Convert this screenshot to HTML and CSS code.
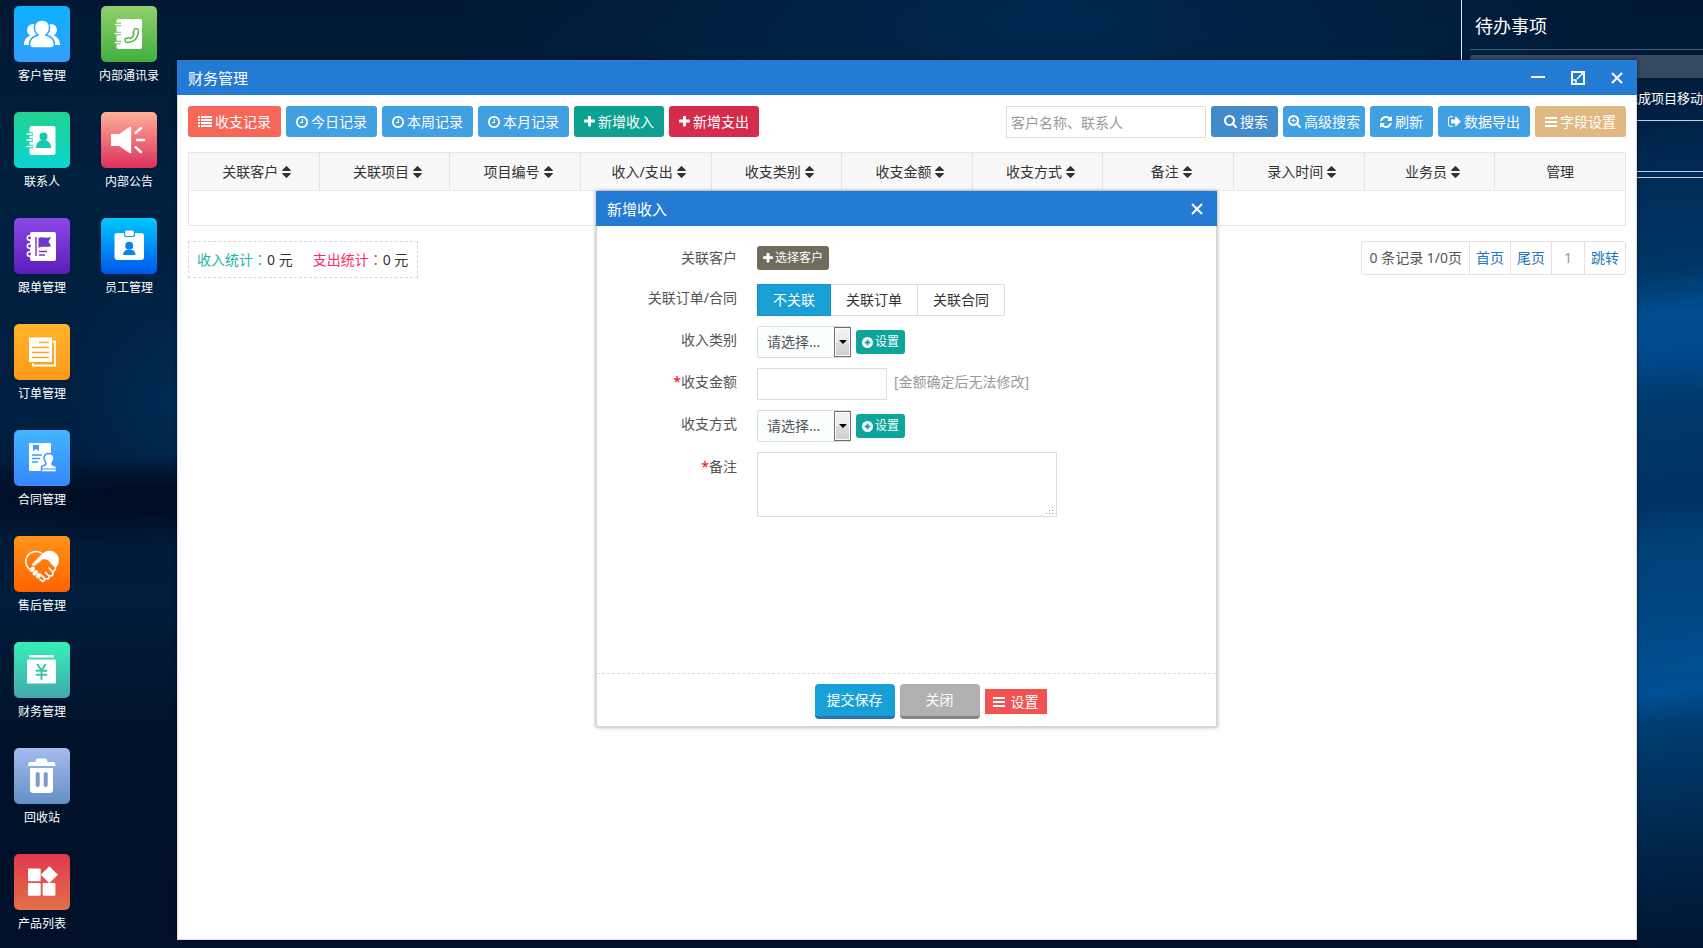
FILE: index.html
```html
<!DOCTYPE html>
<html lang="zh-CN">
<head>
<meta charset="utf-8">
<title>财务管理</title>
<link rel="stylesheet" href="styles.css">
</head>
<body>
<svg class="sprite" aria-hidden="true">
  <symbol id="i-list" viewBox="0 0 14 14"><path d="M0 1h2v2H0zM3 1h11v2H3zM0 4h2v2H0zM3 4h11v2H3zM0 7h2v2H0zM3 7h11v2H3zM0 10h2v2H0zM3 10h11v2H3z"/></symbol>
  <symbol id="i-bars" viewBox="0 0 12 12"><path d="M0 1h12v2H0zM0 5h12v2H0zM0 9h12v2H0z"/></symbol>
  <symbol id="i-clock" viewBox="128 128 1536 1536"><path d="M1024 544v448q0 14-9 23t-23 9h-320q-14 0-23-9t-9-23v-64q0-14 9-23t23-9h224v-352q0-14 9-23t23-9h64q14 0 23 9t9 23zm416 352q0-148-73-273t-198-198-273-73-273 73-198 198-73 273 73 273 198 198 273 73 273-73 198-198 73-273zm224 0q0 209-103 385.500t-279.500 279.500-385.500 103-385.500-103-279.500-279.500-103-385.500 103-385.500 279.500-279.500 385.500-103 385.500 103 279.500 279.500 103 385.500z"/></symbol>
  <symbol id="i-plus" viewBox="192 192 1408 1408"><path d="M1600 736v192q0 40-28 68t-68 28h-416v416q0 40-28 68t-68 28h-192q-40 0-68-28t-28-68v-416h-416q-40 0-68-28t-28-68v-192q0-40 28-68t68-28h416v-416q0-40 28-68t68-28h192q40 0 68 28t28 68v416h416q40 0 68 28t28 68z"/></symbol>
  <symbol id="i-search" viewBox="64 128 1664 1664"><path d="M1216 832q0-185-131.500-316.500t-316.500-131.500-316.500 131.500-131.500 316.500 131.500 316.500 316.500 131.500 316.500-131.500 131.500-316.500zm512 832q0 52-38 90t-90 38q-54 0-90-38l-343-342q-179 124-399 124-143 0-273.500-55.500t-225-150-150-225-55.500-273.500 55.500-273.500 150-225 225-150 273.500-55.500 273.500 55.500 225 150 150 225 55.500 273.500q0 220-124 399l343 343q37 37 37 90z"/></symbol>
  <symbol id="i-zoomin" viewBox="64 128 1664 1664"><use href="#i-search" x="64" y="128" width="1664" height="1664"/><path d="M704 576h128v192h192v128h-192v192h-128v-192h-192v-128h192z"/></symbol>
  <symbol id="i-refresh" viewBox="128 128 1536 1536"><path d="M1639 1056q0 5-1 7-64 268-268 434.500t-478 166.500q-146 0-282.500-55t-243.500-157l-129 129q-19 19-45 19t-45-19-19-45v-448q0-26 19-45t45-19h448q26 0 45 19t19 45-19 45l-137 137q71 66 161 102t187 36q134 0 250-65t186-179q11-17 53-117 8-23 30-23h192q13 0 22.500 9.500t9.500 22.500zm25-800v448q0 26-19 45t-45 19h-448q-26 0-45-19t-19-45 19-45l138-138q-148-137-349-137-134 0-250 65t-186 179q-11 17-53 117-8 23-30 23h-199q-13 0-22.500-9.500t-9.500-22.500v-7q65-268 270-434.500t480-166.500q146 0 284 55.500t245 156.500l130-129q19-19 45-19t45 19 19 45z"/></symbol>
  <symbol id="i-export" viewBox="64 96 1600 1600"><path d="M704 1440q0 4 1 20t.5 26.500-3 23.500-10 19.500-20.500 6.500h-320q-119 0-203.500-84.500t-84.500-203.500v-704q0-119 84.500-203.500t203.500-84.500h320q13 0 22.500 9.500t9.500 22.500q0 4 1 20t.5 26.500-3 23.500-10 19.500-20.500 6.500h-320q-66 0-113 47t-47 113v704q0 66 47 113t113 47h312l11.500 1 11.500 3 8 5.500 7 9 2 13.500zm928-544q0 26-19 45l-544 544q-19 19-45 19t-45-19-19-45v-288h-448q-26 0-45-19t-19-45v-384q0-26 19-45t45-19h448v-288q0-26 19-45t45-19 45 19l544 544q19 19 19 45z"/></symbol>
  <symbol id="i-sort" viewBox="384 192 1024 1408"><path d="M1408 1088q0 26-19 45l-448 448q-19 19-45 19t-45-19l-448-448q-19-19-19-45t19-45 45-19h896q26 0 45 19t19 45zm0-384q0 26-19 45t-45 19h-896q-26 0-45-19t-19-45 19-45l448-448q19-19 45-19t45 19l448 448q19 19 19 45z"/></symbol>
  <symbol id="i-pluscircle" viewBox="0 0 12 12"><path fill-rule="evenodd" d="M6 0a6 6 0 1 0 0 12A6 6 0 0 0 6 0zM5 3h2v2h2v2H7v2H5V7H3V5h2z"/></symbol>
  <symbol id="i-close" viewBox="0 0 12 12"><path d="M1 1l10 10M11 1L1 11" fill="none" stroke="currentColor" stroke-width="2"/></symbol>
</svg>

<div class="desktop">
  <nav class="shortcuts" aria-label="桌面">
    <div class="shortcut-col">
      <a class="shortcut" href="#"><svg class="tile t-blue" viewBox="0 0 56 56"><g fill="#fff"><circle cx="19" cy="24" r="6"/><circle cx="37" cy="24" r="6"/><path d="M10 39c0-6 3-8 7-10h6v10zM46 39c0-6-3-8-7-10h-6v10z"/></g><path d="M28 14c4.500 0 7.500 3 7.500 7.500 0 3-1.500 6-3.500 7.500 5 1.500 8.500 4 8.500 9 0 3-2 4-4 4h-17c-2 0-4-1-4-4 0-5 3.500-7.500 8.500-9-2-1.500-3.500-4.500-3.500-7.500 0-4.500 3-7.500 7.500-7.500z" fill="#fff" stroke="#22a9ff" stroke-width="1.500"/></svg>客户管理</a>
      <a class="shortcut" href="#"><svg class="tile t-teal" viewBox="0 0 56 56"><rect x="15.500" y="14" width="26" height="29" rx="2" fill="#fff"/><g fill="none" stroke="#17d3ac" stroke-width="3.500"><path d="M14 22h5M14 28h5M14 34.500h5"/></g><g stroke="#fff" stroke-width="1.600" stroke-linecap="round"><path d="M13 22h5M13 28h5M13 34.500h5"/></g><circle cx="29.500" cy="24.500" r="4" fill="#14c9b0"/><path d="M22 36c0-5 3-8 7.500-8s7.500 3 7.500 8z" fill="#14c9b0"/></svg>联系人</a>
      <a class="shortcut" href="#"><svg class="tile t-purple" viewBox="0 0 56 56"><rect x="16" y="14" width="26" height="29" rx="2" fill="#fff"/><g fill="#7434c8" stroke="#fff" stroke-width="1.500"><circle cx="15.500" cy="20" r="2.200"/><circle cx="15.500" cy="28" r="2.200"/><circle cx="15.500" cy="36" r="2.200"/></g><path d="M22 19v19M25 33.500h8M25 37h6" stroke="#7434c8" stroke-width="1.400"/><path d="M24.500 20c4-2 7 1 12.500-1l-2.500 4.500 2.500 4.500c-5 2-8-.5-12.500 2z" fill="#7434c8"/></svg>跟单管理</a>
      <a class="shortcut" href="#"><svg class="tile t-amber" viewBox="0 0 56 56"><path d="M19 39v2.500h22V17.500h-2.500" fill="none" stroke="#fff" stroke-width="1.800"/><rect x="15" y="13.500" width="23" height="24.500" fill="#fff"/><path d="M25 18.500h10M18 23.500h17M18 28.500h17M18 33.500h17" stroke="#ffa722" stroke-width="1.500"/></svg>订单管理</a>
      <a class="shortcut" href="#"><svg class="tile t-sky" viewBox="0 0 56 56"><rect x="15" y="13" width="22" height="28" rx="1" fill="#fff"/><path d="M19 15h6v6l-3-2-3 2zM18 24.200h10v1.600H18zM18 27.700h8v1.600h-8zM18 31.200h6v1.600h-6z" fill="#3ba0ff"/><path d="M35 23.500c3 0 5 2 5 5 0 2.500-2.500 3.500-2 6l4.500 2v5.500h-15v-5.500l4.500-2c.5-2.500-2-3.500-2-6 0-3 2-5 5-5z" fill="#fff" stroke="#3b9aff" stroke-width="1.500"/><path d="M28 39h14" stroke="#3b94ff"/></svg>合同管理</a>
      <a class="shortcut" href="#"><svg class="tile t-orange" viewBox="0 0 56 56"><path d="M28 17.500c-5-3.500-12-2-15 3-2.500 5-1 9.500 2.500 13" fill="none" stroke="#fff" stroke-width="1.500"/><path d="M18 28l10-10c5-5 12-4 15.500 1 3 5 1 10-2 13.500L34 24l-5-1-8 6.500c-1.500 1-3.500-.5-3-1.500z" fill="#fff"/><path d="M17.500 34l1.500-1.500M20.500 37.500l1.500-1.500M24 40.500l1.500-1.500" stroke="#fff" stroke-width="4" stroke-linecap="round"/><path d="M26 43.500l3 2 2-2-3-4M31 42.500l3 .5 1.500-2.500-4-4M35.500 40l3-.5.500-3-4-4.500M39 36l2.500-3" fill="none" stroke="#fff" stroke-width="1.700" stroke-linecap="round" stroke-linejoin="round"/></svg>售后管理</a>
      <a class="shortcut" href="#"><svg class="tile t-mint" viewBox="0 0 56 56"><rect x="15" y="13" width="25" height="2.600" rx="1" fill="#fff"/><rect x="13" y="17.500" width="29" height="24" rx="1" fill="#fff"/><path d="M23.500 22.500l4 6 4-6M27.500 28v9M22.500 28.700h10M22.500 32.700h10" fill="none" stroke="#3cc4ae" stroke-width="2" stroke-linecap="round"/></svg>财务管理</a>
      <a class="shortcut" href="#"><svg class="tile t-steel" viewBox="0 0 56 56"><path d="M14 18v-1c0-2 1-3 3-3h4.500c.5-3 1-3.500 3-3.500h6c2 0 2.500.5 3 3.500H38c2.500 0 3.500 1 3.500 3v1z" fill="#fff"/><path d="M16 20h23v22c0 2-1.500 3-3 3H19c-2 0-3-1-3-3z" fill="#fff"/><rect x="21.700" y="24" width="4" height="15" rx="2" fill="#7a9ad2"/><rect x="29.700" y="24" width="4" height="15" rx="2" fill="#7a9ad2"/></svg>回收站</a>
      <a class="shortcut" href="#"><svg class="tile t-red" viewBox="0 0 56 56"><g fill="#fff"><rect x="14" y="14.500" width="12.700" height="12.700" rx="1"/><rect x="14" y="29" width="12.700" height="12.700" rx="1"/><rect x="28.700" y="29" width="12.700" height="12.700" rx="1"/><path d="M35.300 12.300l8.500 8.500-8.500 8.500-8.500-8.500z"/></g></svg>产品列表</a>
    </div>
    <div class="shortcut-col">
      <a class="shortcut" href="#"><svg class="tile t-green" viewBox="0 0 56 56"><rect x="15.500" y="13" width="25.500" height="30" rx="2" fill="#fff"/><g stroke="#6abf57" stroke-width="3.500"><path d="M14 18.500h6M14 27.500h6M14 36.500h6"/></g><g stroke="#fff" stroke-width="1.700" stroke-linecap="round"><path d="M14.500 18.500h5M14.500 27.500h5M14.500 36.500h5"/></g><path d="M34 22.500c2-.5 3.500.5 3.500 2.500-.3 7-4 11-11 11.500-2 0-3-2-2.500-3.500l3.500-1.500 1.500 1c2-.5 3.500-2.500 4-4.500l-1-1.500z" fill="none" stroke="#58b34c" stroke-width="1.400" stroke-linejoin="round"/></svg>内部通讯录</a>
      <a class="shortcut" href="#"><svg class="tile t-rose" viewBox="0 0 56 56"><path d="M11 22h7l10.500-7c1-.6 1.700 0 1.700 1v24c0 1-.7 1.600-1.700 1L18 34h-7c-.6 0-1-.4-1-1V23c0-.6.4-1 1-1z" fill="#fff"/><path d="M34.500 21l5.500-5M36 28h7M34.500 35l5.500 5" stroke="#fff" stroke-width="2.400" stroke-linecap="round"/></svg>内部公告</a>
      <a class="shortcut" href="#"><svg class="tile t-azure" viewBox="0 0 56 56"><rect x="13.500" y="15" width="29.500" height="27" rx="3" fill="#fff"/><rect x="23.500" y="12" width="10" height="6.500" rx="2" fill="#fff" stroke="#04a3f8" stroke-width="1.200"/><circle cx="28.200" cy="27.800" r="4" fill="#0585f3"/><path d="M22 37c0-3 2-5 4-5h4.500c2 0 4 2 4 5z" fill="#0585f3"/></svg>员工管理</a>
    </div>
  </nav>

  <aside class="todo">
    <h2 class="todo-title">待办事项</h2>
    <div class="todo-bar"></div>
    <p class="todo-item">完成项目移动</p>
    <div class="todo-gap"></div>
  </aside>

  <main class="window">
    <header class="titlebar">
      <h1 class="title">财务管理</h1>
      <div class="controls">
        <button class="ctl" type="button" aria-label="最小化"><svg width="14" height="14" viewBox="0 0 14 14"><path d="M0 5h14v2H0z" fill="currentColor"/></svg></button>
        <button class="ctl" type="button" aria-label="还原"><svg width="14" height="14" viewBox="0 0 14 14" fill="none" stroke="currentColor" stroke-width="2"><path d="M1 1h12v12H1z"/><path d="M1 9h4v4M6 8l6-6" stroke-width="1.500"/></svg></button>
        <button class="ctl" type="button" aria-label="关闭"><svg class="ic s12"><use href="#i-close"/></svg></button>
      </div>
    </header>
    <div class="window-body">
      <div class="toolbar">
        <button class="btn coral" type="button"><svg class="ic s14"><use href="#i-list"/></svg>收支记录</button>
        <button class="btn blue" type="button"><svg class="ic s12"><use href="#i-clock"/></svg>今日记录</button>
        <button class="btn blue" type="button"><svg class="ic s12"><use href="#i-clock"/></svg>本周记录</button>
        <button class="btn blue" type="button"><svg class="ic s12"><use href="#i-clock"/></svg>本月记录</button>
        <button class="btn teal" type="button"><svg class="ic s11"><use href="#i-plus"/></svg>新增收入</button>
        <button class="btn crimson" type="button"><svg class="ic s11"><use href="#i-plus"/></svg>新增支出</button>
        <input class="search" type="text" placeholder="客户名称、联系人" aria-label="搜索">
        <button class="btn navy" type="button"><svg class="ic s13"><use href="#i-search"/></svg>搜索</button>
        <button class="btn blue tight" type="button"><svg class="ic s13"><use href="#i-zoomin"/></svg>高级搜索</button>
        <button class="btn blue" type="button"><svg class="ic s12"><use href="#i-refresh"/></svg>刷新</button>
        <button class="btn blue" type="button"><svg class="ic s13"><use href="#i-export"/></svg>数据导出</button>
        <button class="btn sand" type="button"><svg class="ic s12"><use href="#i-bars"/></svg>字段设置</button>
      </div>
      <table class="grid">
        <thead>
          <tr>
            <th>关联客户<svg class="sort"><use href="#i-sort"/></svg></th>
            <th>关联项目<svg class="sort"><use href="#i-sort"/></svg></th>
            <th>项目编号<svg class="sort"><use href="#i-sort"/></svg></th>
            <th>收入/支出<svg class="sort"><use href="#i-sort"/></svg></th>
            <th>收支类别<svg class="sort"><use href="#i-sort"/></svg></th>
            <th>收支金额<svg class="sort"><use href="#i-sort"/></svg></th>
            <th>收支方式<svg class="sort"><use href="#i-sort"/></svg></th>
            <th>备注<svg class="sort"><use href="#i-sort"/></svg></th>
            <th>录入时间<svg class="sort"><use href="#i-sort"/></svg></th>
            <th>业务员<svg class="sort"><use href="#i-sort"/></svg></th>
            <th>管理</th>
          </tr>
        </thead>
        <tbody><tr><td colspan="11"></td></tr></tbody>
      </table>
      <div class="summary">
        <div class="stats">
          <span><span class="income">收入统计<span class="colon" lang="zh-TW">：</span></span>0 元</span>
          <span><span class="expense">支出统计<span class="colon" lang="zh-TW">：</span></span>0 元</span>
        </div>
        <div class="pager">
          <span class="page-cell page-total">0 条记录 1/0页</span>
          <a class="page-cell" href="#">首页</a>
          <a class="page-cell" href="#">尾页</a>
          <input class="page-cell page-no" type="text" value="1" aria-label="页码">
          <a class="page-cell" href="#">跳转</a>
        </div>
      </div>
    </div>
  </main>

  <section class="dialog" role="dialog" aria-labelledby="dlg-title">
    <header class="titlebar">
      <h2 class="title" id="dlg-title">新增收入</h2>
      <div class="controls"><button class="ctl" type="button" aria-label="关闭"><svg class="ic s12"><use href="#i-close"/></svg></button></div>
    </header>
    <form class="form" id="income-form">
      <div class="row">
        <span class="label">关联客户</span>
        <button class="mini olive" type="button"><svg class="ic s10"><use href="#i-plus"/></svg>选择客户</button>
      </div>
      <div class="row">
        <span class="label raised">关联订单/合同</span>
        <div class="segments">
          <button class="seg on" type="button">不关联</button>
          <button class="seg" type="button">关联订单</button>
          <button class="seg" type="button">关联合同</button>
        </div>
      </div>
      <div class="row">
        <label class="label raised" for="kind">收入类别</label>
        <div class="pick"><select id="kind"><option>请选择...</option></select><span class="arrow"></span></div>
        <button class="mini green" type="button"><svg class="ic s11"><use href="#i-pluscircle"/></svg>设置</button>
      </div>
      <div class="row">
        <label class="label raised" for="amount"><span class="req">*</span>收支金额</label>
        <input class="field" id="amount" type="text">
        <span class="hint raised">[金额确定后无法修改]</span>
      </div>
      <div class="row">
        <label class="label raised" for="way">收支方式</label>
        <div class="pick"><select id="way"><option>请选择...</option></select><span class="arrow"></span></div>
        <button class="mini green" type="button"><svg class="ic s11"><use href="#i-pluscircle"/></svg>设置</button>
      </div>
      <div class="row">
        <label class="label" for="memo"><span class="req">*</span>备注</label>
        <div class="memo-box"><textarea class="memo" id="memo"></textarea><svg class="grip" viewBox="0 0 8 8"><path d="M6 0h1v1H6zM3 3h1v1H3zM6 3h1v1H6zM0 6h1v1H0zM3 6h1v1H3zM6 6h1v1H6z" fill="#999"/></svg></div>
      </div>
    </form>
    <footer class="actions">
      <button class="act save" type="submit" form="income-form">提交保存</button>
      <button class="act shut" type="button">关闭</button>
      <button class="setup" type="button"><svg class="ic s12"><use href="#i-bars"/></svg>设置</button>
    </footer>
  </section>
</div>
</body>
</html>
```

FILE: styles.css
```css
* { box-sizing: border-box; }

body {
  margin: 0;
  font: 14px/20px "Noto Sans", "Noto Sans CJK SC", sans-serif;
  color: #333;
}

h1, h2, p { margin: 0; font-weight: 400; }
button, input, select, textarea { font: inherit; color: inherit; margin: 0; }
button { border: 0; padding: 0; cursor: pointer; white-space: nowrap; }
a { text-decoration: none; }

.sprite { position: absolute; width: 0; height: 0; }

.desktop {
  position: relative;
  min-height: 100vh;
  overflow: hidden;
  background:
    linear-gradient(174deg, transparent 60px, #001f42 110px, #002c57 180px, #003665 270px, #004d90 315px, #00488a 360px, #003a6d 400px, #003262 500px, #003f76 540px, #004985 630px, #005095 690px, #003d71 725px, #002c55 810px, #001c3d 900px, #001530 948px) right / 66px 100% no-repeat,
    radial-gradient(ellipse 360px 44px at 177px 500px, #000e25 30%, transparent),
    radial-gradient(ellipse 130px 150px at 177px 400px, #002b52, transparent),
    radial-gradient(ellipse 600px 200px at 1050px 20px, #00284f, transparent),
    linear-gradient(#001833 0, #00203f 200px, #001e40 440px, #001834 500px, #001c3c 600px, #001229 740px, #001129 100%);
}

.shortcuts { display: flex; padding-top: 6px; }
.shortcut-col { display: flex; flex-direction: column; gap: 22px; }
.shortcut-col:first-child { width: 84px; }
.shortcut-col:last-child { width: 90px; }
.shortcut {
  display: flex;
  flex-direction: column;
  align-items: center;
  gap: 4px;
  height: 84px;
  color: #fff;
  font-size: 12px;
}
.tile { width: 56px; height: 56px; border-radius: 5px; flex: none; }
.t-blue { background: linear-gradient(#0cb2ff, #359dff); }
.t-teal { background: linear-gradient(#22d390, #0bd4d0); }
.t-purple { background: linear-gradient(#8c48e4, #5c1cb8); }
.t-amber { background: linear-gradient(#ffb52b, #ff991a); }
.t-sky { background: linear-gradient(#41b5ff, #3787ff); }
.t-orange { background: linear-gradient(#ff931a, #ff6200); }
.t-mint { background: linear-gradient(#37f0b8, #42a7ad); }
.t-steel { background: linear-gradient(#a6bbee, #648fc6); }
.t-red { background: linear-gradient(#e2384c, #e27048); }
.t-green { background: linear-gradient(#92d070, #40b03e); }
.t-rose { background: linear-gradient(#ffb197, #dd305c); }
.t-azure { background: linear-gradient(#00c8ff, #0056ea); }

.todo {
  position: absolute;
  top: 0;
  right: 0;
  width: 242px;
  height: 178px;
  padding-left: 8px;
  border-left: 1px solid #dfe5ec;
  border-bottom: 1px solid #c8cfd8;
  color: #fff;
}
.todo-title {
  height: 50px;
  padding-left: 5px;
  border-bottom: 1px solid #4b6078;
  font-size: 18px;
  line-height: 53px;
}
.todo-bar { height: 23px; margin-top: 5px; border-radius: 3px 0 0; background: #344a62; }
.todo-item {
  height: 43px;
  border-bottom: 1px solid #c8cfd8;
  font-size: 13px;
  line-height: 40px;
  text-align: right;
  white-space: nowrap;
}
.todo-gap { height: 51px; border-bottom: 1px solid #c8cfd8; }

.ic { display: block; flex: none; fill: currentColor; }
.s10 { width: 10px; height: 10px; }
.s11 { width: 11px; height: 11px; }
.s12 { width: 12px; height: 12px; }
.s13 { width: 13px; height: 13px; }
.s14 { width: 14px; height: 14px; }

.window {
  position: absolute;
  top: 60px;
  right: 66px;
  bottom: 8px;
  left: 177px;
  background: #fff;
  box-shadow: inset 0 0 0 1px #d8dce2, 0 0 4px rgba(0, 0, 0, .5);
}
.titlebar {
  display: flex;
  align-items: center;
  justify-content: space-between;
  height: 35px;
  padding: 0 14px 0 11px;
  background: #247bd3;
  color: #fff;
}
.title { font-size: 15px; }
.controls { display: flex; gap: 26px; align-items: center; }
.ctl { display: flex; background: none; }

.window-body { padding: 11px 11px 0; }
.toolbar { display: flex; gap: 5px; }
.btn {
  display: flex;
  align-items: center;
  gap: 3px;
  height: 31px;
  padding: 0 10px;
  border-radius: 3px;
  color: #fff;
}
.coral { background: #f6675a; }
.blue { background: #40a0e2; }
.teal { background: #0da192; }
.crimson { background: #d62c4c; }
.navy { background: #428bca; padding: 0 10px 0 13px; }
.tight { padding: 0 5px; }
.sand { background: #dfb981; }
.search {
  width: 200px;
  height: 32px;
  margin-left: auto;
  padding: 0 4px;
  border: 1px solid #ddd;
  background: #fff;
}
.search::placeholder { color: #999; }

.grid {
  width: 100%;
  margin-top: 14px;
  border-collapse: collapse;
  table-layout: fixed;
}
.grid th, .grid td { border: 1px solid #e6e6e6; padding: 0; }
.grid th { height: 38px; background: #f8f8f8; font-weight: 400; }
.grid th:not(:last-child) { padding-left: 6px; }
.grid td { height: 35px; }
.sort { width: 9px; height: 12px; margin-left: 4px; vertical-align: -1px; fill: #333; }

.summary {
  display: flex;
  justify-content: space-between;
  align-items: flex-start;
  margin-top: 15px;
}
.stats {
  display: flex;
  gap: 20px;
  padding: 8px 9px 7px 8px;
  border: 1px dashed #d8d8d8;
}
.colon { font-family: "Noto Sans CJK TC", sans-serif; line-height: 1; }
.income { color: #1ab5a5; }
.expense { color: #ff2d67; }
.pager {
  display: flex;
  border: 1px solid #eddde0;
  border-radius: 3px;
  color: #555;
}
.page-cell { padding: 6px; line-height: 20px; }
.page-total { padding: 6px 7px; }
.page-cell + .page-cell { border-left: 1px solid #eddde0; }
a.page-cell { color: #2277bb; }
input.page-no {
  width: 33px;
  border-width: 0;
  background: none;
  color: #999;
  text-align: center;
}

.dialog {
  position: absolute;
  top: 191px;
  left: 596px;
  display: flex;
  flex-direction: column;
  width: 621px;
  height: 536px;
  background: #fff;
  box-shadow: inset 0 0 0 1px #d6d6d6, 0 0 4px rgba(0, 0, 0, .4);
}
.dialog .titlebar { flex: none; }
.form {
  display: flex;
  flex: 1;
  flex-direction: column;
  gap: 10px;
  padding: 16px 1px 0;
}
.row { display: flex; align-items: center; min-height: 32px; }
.label { width: 140px; margin-right: 20px; text-align: right; color: #555; }
.raised { padding-bottom: 4px; }
.row:last-child { align-items: flex-start; }
.row:last-child .label { line-height: 30px; }
.req { color: #f00; }
.mini {
  display: flex;
  align-items: center;
  gap: 2px;
  height: 24px;
  padding: 0 6px;
  border-radius: 3px;
  color: #fff;
  font-size: 12px;
}
.olive { background: #6f6c5d; }
.green { margin-left: 5px; background: #0da59b; }
.segments { display: flex; }
.seg {
  height: 32px;
  padding: 0 15px;
  border: 1px solid #ddd;
  border-left-width: 0;
  background: #fff;
}
.seg.on { border-color: #1790c4; border-left-width: 1px; background: #189fd6; color: #fff; }
.pick { position: relative; width: 94px; height: 32px; }
.pick select {
  width: 100%;
  height: 100%;
  padding: 0 18px 0 9px;
  border: 1px solid #ddd;
  border-radius: 2px;
  appearance: none;
  background: #fafeff;
  color: #555;
}
.arrow {
  position: absolute;
  top: 1px;
  right: 0;
  bottom: 1px;
  display: flex;
  align-items: center;
  justify-content: center;
  width: 17px;
  border: 1px solid #707070;
  background: linear-gradient(#f2f2f2, #ebebeb 50%, #ddd 50%, #cfcfcf);
  box-shadow: inset 0 0 0 1px #fcfcfc;
  pointer-events: none;
}
.arrow::after {
  content: "";
  border: 4px solid transparent;
  border-top-color: #000;
  border-bottom-width: 0;
}
.field { width: 130px; height: 32px; padding: 0 8px; border: 1px solid #ddd; }
.hint { margin-left: 7px; color: #999; }
.memo-box { position: relative; display: flex; }
.memo {
  width: 300px;
  height: 65px;
  padding: 6px 8px;
  border: 1px solid #ddd;
  resize: none;
}
.grip { position: absolute; right: 3px; bottom: 2px; width: 8px; height: 8px; }

.actions {
  display: flex;
  align-items: center;
  justify-content: center;
  gap: 5px;
  height: 54px;
  margin: 0 1px;
  padding: 2px 0 0 48px;
  border-top: 1px dashed #ddd;
}
.act {
  width: 80px;
  height: 35px;
  border-bottom: 3px solid;
  border-radius: 4px;
  color: #fff;
}
.save { background: #189fd6; border-color: #2a70b4; }
.shut { background: #b3b1b0; border-color: #858585; }
.setup {
  display: flex;
  align-items: center;
  gap: 6px;
  height: 25px;
  padding: 0 8px;
  background: #f05351;
  color: #fff;
}
```
